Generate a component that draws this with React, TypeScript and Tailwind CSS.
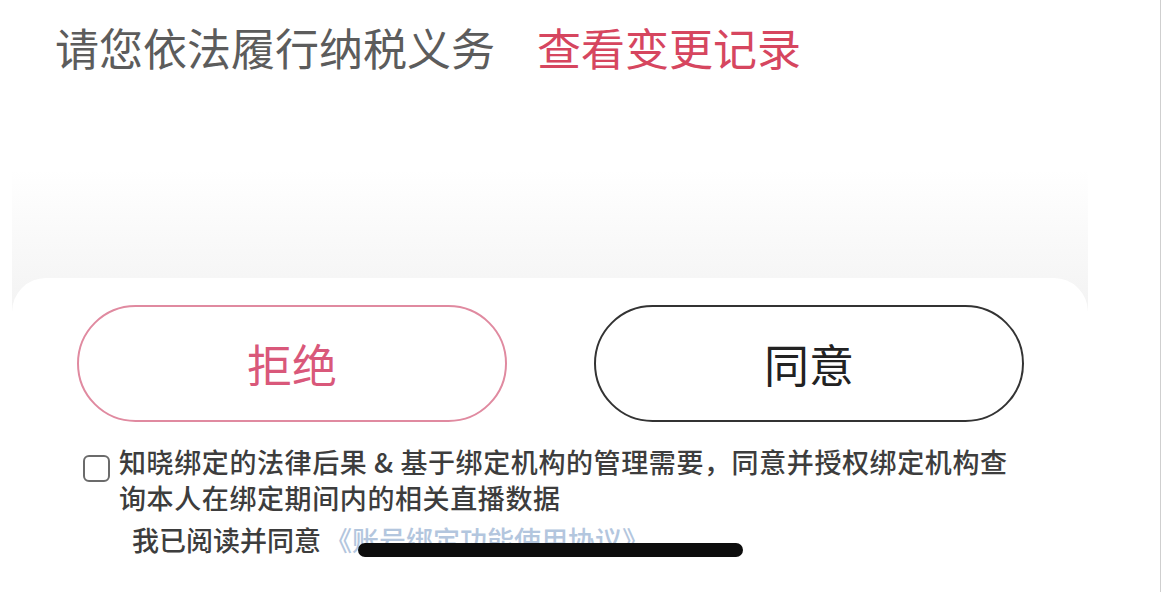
const cjk = "font-['Noto_Sans_CJK_SC','Noto_Sans',sans-serif]";

function ConsentRow() {
  return (
    <div className="flex flex-col">
      <div className="flex items-start">
        <span className="mt-[11px] ml-[6px] mr-[9px] h-[27px] w-[27px] shrink-0 rounded-[6px] border-2 border-[#6b6b6b] bg-white" />
        <p className="text-[27px] leading-[36px] font-medium tracking-[0.6px] text-[#3d3d3d]">
          知晓绑定的法律后果 &amp; 基于绑定机构的管理需要，同意并授权绑定机构查
          <br />
          询本人在绑定期间内的相关直播数据
        </p>
      </div>
      <p className="mt-[6px] pl-[55px] text-[27px] leading-[36px] font-medium text-[#3d3d3d]">
        我已阅读并同意<span className="ml-[4px] text-[#b3c6de]">《账号绑定功能使用协议》</span>
      </p>
    </div>
  );
}

export default function App() {
  return (
    <div className={`flex h-[592px] w-[1163px] overflow-hidden bg-white ${cjk}`}>
      <div className="relative flex w-[1160px] flex-col">
        <div className="flex items-center pl-[55px] pt-[20px] text-[44px] leading-[54px]">
          <span className="text-[#5c5c5c]">请您依法履行纳税义务</span>
          <span className="ml-[42px] text-[#d6465f]">查看变更记录</span>
        </div>

        <div className="mt-[96px] ml-[12px] w-[1076px] bg-[linear-gradient(to_bottom,#ffffff_0%,#f4f4f4_30%,#e6e6e6_70%,#dcdcdc_100%)] pt-[108px]">
          <div className="rounded-t-[34px] bg-white pt-[27px] pl-[65px] pr-[64px] pb-[40px]">
            <div className="flex gap-[87px]">
              <button className="flex h-[117px] w-[430px] items-center justify-center rounded-full border-2 border-[#e08aa0] text-[45px] text-[#d9587a]">
                拒绝
              </button>
              <button className="flex h-[117px] w-[430px] items-center justify-center rounded-full border-2 border-[#333] text-[45px] text-[#222]">
                同意
              </button>
            </div>
            <div className="mt-[22px]">
              <ConsentRow />
            </div>
          </div>
        </div>

        {/* home indicator */}
        <div className="absolute left-[358px] top-[543px] h-[14px] w-[385px] rounded-full bg-[#0d0d0d]" />
      </div>
      <div className="w-px bg-[#cfcfcf]" />
      <div className="w-[2px] bg-white" />
    </div>
  );
}
